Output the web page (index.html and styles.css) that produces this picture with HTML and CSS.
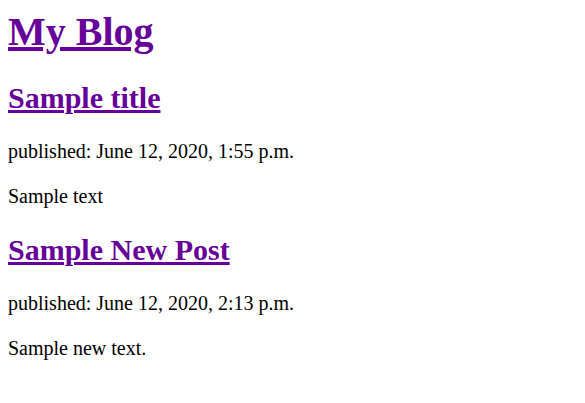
FILE: index.html
```html
<!DOCTYPE html>
<html>
<head>
<meta charset="utf-8">
<title>My Blog</title>
<link rel="stylesheet" href="styles.css">
</head>
<body>
<h1 class="site-title"><a class="link" href="#">My Blog</a></h1>
<div class="post">
  <h2 class="post-title"><a class="link" href="#">Sample title</a></h2>
  <p class="meta">published: June 12, 2020, 1:55 p.m.</p>
  <p class="body">Sample text</p>
</div>
<div class="post">
  <h2 class="post-title"><a class="link" href="#">Sample New Post</a></h2>
  <p class="meta">published: June 12, 2020, 2:13 p.m.</p>
  <p class="body">Sample new text.</p>
</div>
</body>
</html>
```
FILE: styles.css
```css
body {
  margin: 8px;
  font-family: "Liberation Serif", "Times New Roman", serif;
  font-size: 20px;
  color: #000;
  background: #fff;
}
.link { color: #660099; }
.site-title {
  font-size: 40px;
  margin: 0;
  padding-bottom: 1px;
}
.post-title {
  font-size: 30px;
  margin: 25px 0;
}
.meta {
  margin: 20px 0 22px;
}
.body {
  margin: 22px 0 20px;
}
```
